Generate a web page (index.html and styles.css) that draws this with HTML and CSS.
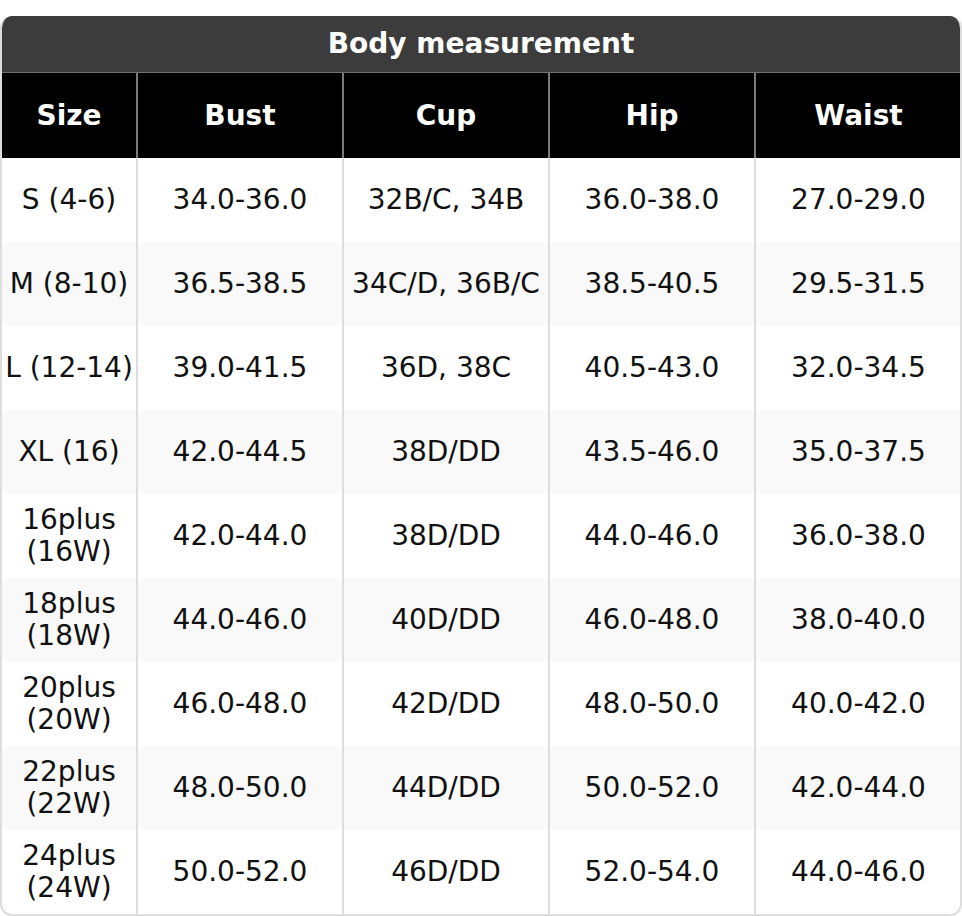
FILE: index.html
```html
<!DOCTYPE html>
<html>
<head>
<meta charset="utf-8">
<link rel="stylesheet" href="styles.css">
</head>
<body>
<div class="chart">
  <div class="title">Body measurement</div>
  <table class="sizes">
    <colgroup>
      <col class="c-size"><col class="c-val"><col class="c-val"><col class="c-val"><col class="c-val">
    </colgroup>
    <thead>
      <tr><th>Size</th><th>Bust</th><th>Cup</th><th>Hip</th><th>Waist</th></tr>
    </thead>
    <tbody>
      <tr><td>S (4-6)</td><td>34.0-36.0</td><td>32B/C, 34B</td><td>36.0-38.0</td><td>27.0-29.0</td></tr>
      <tr><td>M (8-10)</td><td>36.5-38.5</td><td>34C/D, 36B/C</td><td>38.5-40.5</td><td>29.5-31.5</td></tr>
      <tr><td>L (12-14)</td><td>39.0-41.5</td><td>36D, 38C</td><td>40.5-43.0</td><td>32.0-34.5</td></tr>
      <tr><td>XL (16)</td><td>42.0-44.5</td><td>38D/DD</td><td>43.5-46.0</td><td>35.0-37.5</td></tr>
      <tr><td>16plus<br>(16W)</td><td>42.0-44.0</td><td>38D/DD</td><td>44.0-46.0</td><td>36.0-38.0</td></tr>
      <tr><td>18plus<br>(18W)</td><td>44.0-46.0</td><td>40D/DD</td><td>46.0-48.0</td><td>38.0-40.0</td></tr>
      <tr><td>20plus<br>(20W)</td><td>46.0-48.0</td><td>42D/DD</td><td>48.0-50.0</td><td>40.0-42.0</td></tr>
      <tr><td>22plus<br>(22W)</td><td>48.0-50.0</td><td>44D/DD</td><td>50.0-52.0</td><td>42.0-44.0</td></tr>
      <tr><td>24plus<br>(24W)</td><td>50.0-52.0</td><td>46D/DD</td><td>52.0-54.0</td><td>44.0-46.0</td></tr>
    </tbody>
  </table>
</div>
</body>
</html>
```
FILE: styles.css
```css
html, body {
  margin: 0;
  padding: 0;
  background: #ffffff;
}
body {
  padding-top: 16px;
  font-family: "DejaVu Sans", sans-serif;
}
.chart {
  width: 962px;
  box-sizing: border-box;
  border: 2px solid #dddddd;
  border-top: none;
  border-radius: 12px;
  overflow: hidden;
}
.title {
  height: 56px;
  background: #3c3c3c;
  color: #ffffff;
  font-weight: bold;
  font-size: 28px;
  line-height: 56px;
  text-align: center;
  border-bottom: 1px solid #707070;
}
.sizes {
  width: 100%;
  border-collapse: collapse;
  table-layout: fixed;
}
.c-size { width: 135px; }
.c-val { width: 206px; }
.sizes th {
  background: #000000;
  color: #ffffff;
  font-weight: bold;
  font-size: 28px;
  height: 85px;
  padding: 0;
  border-left: 2px solid #7a7a7a;
  text-align: center;
  box-sizing: border-box;
}
.sizes td {
  height: 84px;
  padding: 0;
  font-size: 28px;
  line-height: 32px;
  color: #111111;
  text-align: center;
  border-left: 2px solid #dddddd;
  box-sizing: border-box;
}
.sizes th:first-child, .sizes td:first-child {
  border-left: none;
}
.sizes tbody tr:nth-child(even) td {
  background: #f9f9f9;
}
```
